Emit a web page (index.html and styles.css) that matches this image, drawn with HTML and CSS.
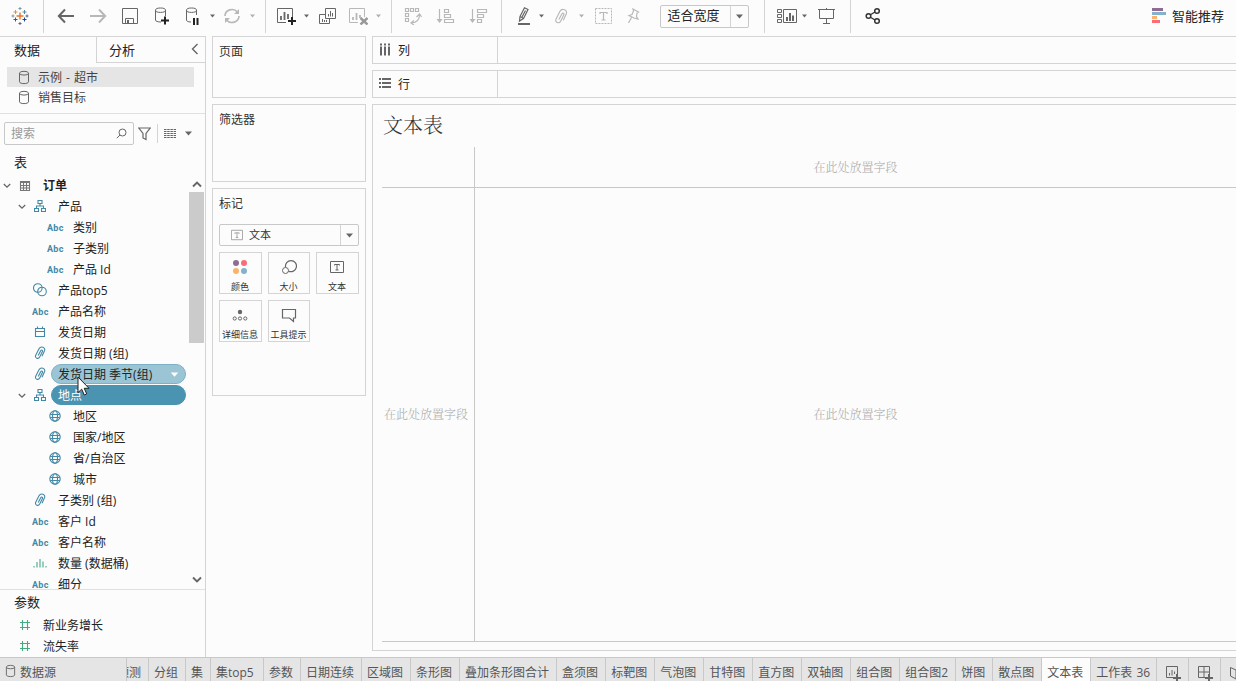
FILE: index.html
```html
<!DOCTYPE html>
<html lang="zh-CN">
<head>
    <meta charset="UTF-8">
    <meta name="viewport" content="width=device-width, initial-scale=1.0">
    <title>文本表</title>
    <link rel="stylesheet" href="styles.css">
</head>
<body>
    <!-- 图标定义 -->
    <svg class="defs">
        <symbol id="i-db" viewBox="0 0 12 15">
            <path d="M1.5 3.2v8.6c0 1 2 1.8 4.5 1.8s4.5-.8 4.5-1.8V3.2"/>
            <ellipse cx="6" cy="3.2" rx="4.5" ry="1.9"/>
        </symbol>
        <symbol id="i-caret" viewBox="0 0 6 4"><path class="fill" d="M0 .3h6L3 3.7z"/></symbol>
        <symbol id="i-chev" viewBox="0 0 8 6"><path d="M.8 1L4 4.200 7.200 1"/></symbol>
        <symbol id="i-hier" viewBox="0 0 12 12">
            <path d="M4 .5h4v3H4zM.5 8.500h4v3h-4zM7.500 8.500h4v3h-4zM6 3.500V6M2.500 8.500V6h7v2.500"/>
        </symbol>
        <symbol id="i-set" viewBox="0 0 14 14">
            <circle cx="4.800" cy="5" r="4.300"/><circle cx="9" cy="8.500" r="4.300"/>
        </symbol>
        <symbol id="i-cal" viewBox="0 0 12 12">
            <path d="M1.500 2.500h9v8h-9zM1.500 5.500h9M3.500.5v2M8.500.5v2"/>
        </symbol>
        <symbol id="i-clip" viewBox="0 0 12 14">
            <path d="M4.200 9.500L6.700 4.800c.8-1.400 2.400-.6 1.700.8L5.700 11c-1.300 2.500-5.200 1.200-4-1.700L5 2.800c1.800-3.400 6.900-1.500 5.500 2L8 10.200"/>
        </symbol>
        <symbol id="i-globe" viewBox="0 0 12 12">
            <circle cx="6" cy="6" r="5.200"/><ellipse cx="6" cy="6" rx="2.500" ry="5.200"/><path d="M1.200 4.500h9.600M1.200 7.500h9.600"/>
        </symbol>
        <symbol id="i-bins" viewBox="0 0 14 12">
            <path d="M1 9v1.500M4 5v5.500M7 2v8.500M10 4.500v6M13 9v1.500"/>
        </symbol>
        <symbol id="i-num" viewBox="0 0 12 12"><path d="M3.500 1v10M8.500 1v10M1 3.500h10M1 8.500h10"/></symbol>
        <symbol id="i-text" viewBox="0 0 14 14">
            <path d="M.5 1.500h13v11H.5zM4.500 5.500v-1h5v1M7 4.500v5.500M5.500 10h3"/>
        </symbol>
    </svg>

    <div class="toolbar">
        <div class="group g-logo">
            <svg width="18" height="18" viewBox="0 0 18 18">
                <path stroke="#e8762d" stroke-width="1.400" d="M9 5.500v7M5.500 9h7"/>
                <path stroke="#c72035" d="M4.500 10.500v4M2.500 12.500h4"/>
                <path stroke="#eb9129" d="M4.500 3v4M2.500 5h4"/>
                <path stroke="#59879b" d="M13.500 3v4M11.500 5h4"/>
                <path stroke="#1f457e" d="M13.500 10.500v4M11.500 12.500h4"/>
                <path stroke="#7199a6" d="M9 0v3M7.500 1.500h3M2 7.500v3M.5 9h3"/>
                <path stroke="#5b6591" d="M9 15v3M7.500 16.500h3M16 7.500v3M14.500 9h3"/>
            </svg>
        </div>
        <div class="group g-file">
            <svg width="18" height="16"><path stroke-width="2" d="M17 8H2M8 1.500L1.800 8 8 14.500"/></svg>
            <svg class="off" width="18" height="16"><path stroke-width="2" d="M1 8h15M10 1.500L16.200 8 10 14.500"/></svg>
            <svg width="16" height="16"><path d="M.5.5h15v15H.5zM3.500 15.500v-5h8v5"/><path class="fill" d="M5 12h2v3H5z"/></svg>
            <svg width="16" height="18"><path d="M7 15C3.500 15 1.500 14.200 1.500 13V3.200M11.500 3.200V9"/><ellipse cx="6.500" cy="3.200" rx="5" ry="2.200"/><path stroke="#222" stroke-width="2" d="M11 9.500v8M7 13.500h8"/></svg>
            <svg width="16" height="18"><path d="M7 15C4 15 2.500 14.200 2.500 13V3.200M12.500 3.200V8"/><ellipse cx="7.500" cy="3.200" rx="5" ry="2.200"/><path stroke="#222" stroke-width="2" d="M10 11v7M13.500 11v7"/></svg>
            <svg class="caret"><use href="#i-caret"/></svg>
            <svg class="off" width="18" height="16"><path stroke-width="1.600" d="M2 8a7 6.500 0 0 1 12.500-4M16 8A7 6.500 0 0 1 3.500 12"/><path class="fill" d="M16 1v5h-5zM2 15v-5h5z"/></svg>
            <svg class="caret off"><use href="#i-caret"/></svg>
        </div>
        <div class="group g-sheet">
            <svg width="20" height="18"><path d="M10 15.500H1.500V1.500h15V11"/><path stroke-width="1.800" d="M5 9v4M8.500 5v8M12 7v5"/><path stroke="#222" stroke-width="2" d="M16 10v8M12 14h8"/></svg>
            <svg class="caret"><use href="#i-caret"/></svg>
            <svg width="19" height="18"><path d="M7.500 1.500h10v10h-10zM7.500 7.500h-6v9h10v-5M4.500 12v3M6.500 13v2M8.500 13v2M10.500 7v2.500M12.500 4v5.500M14.500 6v3.500"/></svg>
            <svg class="off" width="20" height="18"><path d="M10 15.500H1.500V1.500h15V10"/><path stroke-width="1.800" d="M5 10v3M8.500 6v7M12 8v3"/><path stroke="#999" stroke-width="2.400" d="M12.500 11l7 6.500M19.500 11l-7 6.500"/></svg>
            <svg class="caret off"><use href="#i-caret"/></svg>
        </div>
        <div class="group g-sort">
            <svg class="off" width="18" height="18"><path stroke-width="1.200" d="M1.500 1.500h3v3h-3zM6.500 1.500h3v3h-3zM11.500 1.500h3v3h-3zM1.500 6.500h3v3h-3zM1.500 11.500h3v3h-3zM15.500 8c0 5-3 7.500-8 8M12.500 10l3-3 2.200 3M10 13.500l-3 2.500 3 2"/></svg>
            <svg class="off" width="19" height="16"><path stroke-width="1.200" d="M3.500 1v13M8.500 1.500h4v3h-4zM8.500 6.500h6v3h-6zM8.500 11.500h9v3h-9z"/><path class="fill" d="M.5 11h6l-3 4z"/></svg>
            <svg class="off" width="19" height="16"><path stroke-width="1.200" d="M3.500 1v13M8.500 1.500h9v3h-9zM8.500 6.500h6v3h-6zM8.500 11.500h4v3h-4z"/><path class="fill" d="M.5 11h6l-3 4z"/></svg>
        </div>
        <div class="group g-format">
            <svg width="14" height="18"><path stroke-width="1.200" d="M3 9.500L7.500.8l3.500 1.700L6.500 11.500 2.500 14zM3 9.500l3.500 2M8.500 3.500L5 10"/><path stroke-width="2" d="M1 17h12"/></svg>
            <svg class="caret"><use href="#i-caret"/></svg>
            <svg class="off" width="14" height="17"><use href="#i-clip"/></svg>
            <svg class="caret off"><use href="#i-caret"/></svg>
            <svg class="off" width="17" height="16"><path stroke-dasharray="2 1" d="M.5.5h16v15H.5z"/><path stroke-width="1.200" d="M5 6V4.500h7V6M8.500 4.500v7.500M6.500 12h4"/></svg>
            <svg class="off" width="14" height="16"><path stroke-width="1.200" d="M7 1l5.500 3-1.500 1-.5 3.500 1.500 2.500-4-1-5-2.500 3-1L7.500 3zM5.500 9.500L2.500 15"/></svg>
            <div class="select fit"><span>适合宽度</span><i><svg class="caret big"><use href="#i-caret"/></svg></i></div>
        </div>
        <div class="group g-show">
            <svg width="20" height="16"><path d="M.5 1.500h4v3h-4zM.5 6.500h4v3h-4zM.5 11.500h4v3h-4zM6.500 1.500h13v13h-13z"/><path stroke-width="2" d="M10 9v4M13 5v8M16 7.500V13"/></svg>
            <svg class="caret"><use href="#i-caret"/></svg>
            <svg width="17" height="16"><path d="M0 1.500h17M1.500 1.500v9h14v-9M8.500 0v1.500M8.500 10.500v5M5 15.500h7"/></svg>
        </div>
        <div class="group g-share">
            <svg class="dark" width="16" height="18"><path stroke-width="1.300" d="M5 8l5-3M5 10l5 3"/><g stroke-width="1.500"><circle cx="3.500" cy="9" r="2.300"/><circle cx="12" cy="4" r="2.300"/><circle cx="12" cy="14" r="2.300"/></g></svg>
        </div>
        <div class="showme">
            <svg width="14" height="15"><path stroke="#8e6c94" stroke-width="3" d="M0 1.500h11"/><path stroke="#83b3cb" stroke-width="3" d="M0 5.500h14"/><path stroke="#fbb36b" stroke-width="3" d="M0 9.500h5"/><path stroke="#fa6d78" stroke-width="3" d="M0 13.500h8"/></svg>
            <span>智能推荐</span>
        </div>
    </div>

    <div class="main">
        <div class="side">
            <div class="side-tabs">
                <div class="side-tab">数据</div>
                <div class="side-tab other">分析<svg width="8" height="12"><path stroke-width="1.400" d="M6.500 1L1.500 6l5 5"/></svg></div>
            </div>
            <div class="sources">
                <div class="source on"><svg class="db"><use href="#i-db"/></svg><span>示例 - 超市</span></div>
                <div class="source"><svg class="db"><use href="#i-db"/></svg><span>销售目标</span></div>
            </div>
            <div class="search-row">
                <div class="search">搜索<svg width="11" height="11"><circle cx="6.500" cy="4.500" r="3.500"/><path d="M4 7L.8 10.200"/></svg></div>
                <svg width="13" height="14"><path stroke-width="1.200" d="M.8 1h11.400L8 6.500v6l-3-1.500V6.500z"/></svg>
                <div class="view-as">
                    <svg width="12" height="10"><path stroke-dasharray="2.500 .7" d="M0 .5h12M0 2.500h12M0 4.500h12M0 6.500h12M0 8.500h12"/></svg>
                    <svg class="caret big"><use href="#i-caret"/></svg>
                </div>
            </div>
            <div class="heading">表</div>
            <div class="fields">
                <div class="field-list">
                    <div class="field table"><svg class="chev"><use href="#i-chev"/></svg><svg class="icon grey" viewBox="0 0 12 12"><path d="M1.500 1.500h9v9h-9zM1.500 2.500h9M1.500 5.500h9M1.500 8h9M4.500 3v7.500M7.500 3v7.500"/></svg><span>订单</span></div>
                    <div class="field parent"><svg class="chev"><use href="#i-chev"/></svg><svg class="icon"><use href="#i-hier"/></svg><span>产品</span></div>
                    <div class="field child"><b>Abc</b><span>类别</span></div>
                    <div class="field child"><b>Abc</b><span>子类别</span></div>
                    <div class="field child"><b>Abc</b><span>产品 Id</span></div>
                    <div class="field"><svg class="icon wide"><use href="#i-set"/></svg><span>产品top5</span></div>
                    <div class="field"><b>Abc</b><span>产品名称</span></div>
                    <div class="field"><svg class="icon"><use href="#i-cal"/></svg><span>发货日期</span></div>
                    <div class="field"><svg class="icon clip"><use href="#i-clip"/></svg><span>发货日期 (组)</span></div>
                    <div class="field"><svg class="icon clip"><use href="#i-clip"/></svg><span class="pill hover">发货日期 季节(组)<svg class="caret"><use href="#i-caret"/></svg></span>
                        <svg class="cursor" viewBox="0 0 13 20"><path d="M1 1v15.500l3.700-3.300 2.600 5.800 2.400-1.100-2.500-5.600H12z"/></svg>
                    </div>
                    <div class="field parent"><svg class="chev"><use href="#i-chev"/></svg><svg class="icon"><use href="#i-hier"/></svg><span class="pill on">地点</span></div>
                    <div class="field child"><svg class="icon"><use href="#i-globe"/></svg><span>地区</span></div>
                    <div class="field child"><svg class="icon"><use href="#i-globe"/></svg><span>国家/地区</span></div>
                    <div class="field child"><svg class="icon"><use href="#i-globe"/></svg><span>省/自治区</span></div>
                    <div class="field child"><svg class="icon"><use href="#i-globe"/></svg><span>城市</span></div>
                    <div class="field"><svg class="icon clip"><use href="#i-clip"/></svg><span>子类别 (组)</span></div>
                    <div class="field"><b>Abc</b><span>客户 Id</span></div>
                    <div class="field"><b>Abc</b><span>客户名称</span></div>
                    <div class="field"><svg class="icon wide green"><use href="#i-bins"/></svg><span>数量 (数据桶)</span></div>
                    <div class="field"><b>Abc</b><span>细分</span></div>
                </div>
                <div class="scrollbar">
                    <svg class="up"><use href="#i-chev"/></svg>
                    <div class="thumb"></div>
                    <svg><use href="#i-chev"/></svg>
                </div>
            </div>
            <div class="params">
                <div class="heading">参数</div>
                <div class="field param"><svg class="icon green"><use href="#i-num"/></svg><span>新业务增长</span></div>
                <div class="field param"><svg class="icon green"><use href="#i-num"/></svg><span>流失率</span></div>
            </div>
        </div>

        <div class="cards">
            <div class="card pages">页面</div>
            <div class="card filters">筛选器</div>
            <div class="card marks">
                <div>标记</div>
                <div class="select mark-type"><svg width="12" height="12"><use href="#i-text"/></svg><span>文本</span><i><svg class="caret big"><use href="#i-caret"/></svg></i></div>
                <div class="mark-grid">
                    <div class="mark"><svg class="dots" width="16" height="16"><circle cx="4" cy="4" r="3" fill="#8e6c94"/><circle cx="12" cy="4" r="3" fill="#fa6d78"/><circle cx="4" cy="12" r="3" fill="#fbb36b"/><circle cx="12" cy="12" r="3" fill="#83b3cb"/></svg>颜色</div>
                    <div class="mark"><svg width="16" height="16"><path stroke-width="1.200" d="M4.600 8.300a5.500 5.500 0 1 1 3 3.800"/><circle cx="4.500" cy="11.500" r="3"/></svg>大小</div>
                    <div class="mark"><svg width="14" height="16"><use href="#i-text"/></svg>文本</div>
                    <div class="mark"><svg width="16" height="16"><circle class="fill" cx="8" cy="5" r="2.200"/><circle cx="2.700" cy="11.500" r="1.600"/><circle cx="8" cy="11.500" r="1.600"/><circle cx="13.300" cy="11.500" r="1.600"/></svg>详细信息</div>
                    <div class="mark"><svg width="16" height="16"><path stroke-width="1.200" d="M1.500 2.500h13v8.500h-2v3.500L8.500 11h-7z"/></svg>工具提示</div>
                </div>
            </div>
        </div>

        <div class="work">
            <div class="shelf"><div class="shelf-name"><svg width="12" height="13"><path stroke-width="2" d="M2 3.500v9M6 3.500v9M10 3.500v9M2 .5v2M6 .5v2M10 .5v2"/></svg><span>列</span></div></div>
            <div class="shelf"><div class="shelf-name"><svg width="12" height="13"><path stroke-width="2" d="M0 2h2M3 2h9M0 6h2M3 6h9M0 10h2M3 10h9"/></svg><span>行</span></div></div>
            <div class="view">
                <div class="view-title">文本表</div>
                <div class="pane">
                    <div class="cell corner"></div>
                    <div class="cell top">在此处放置字段</div>
                    <div class="cell left">在此处放置字段</div>
                    <div class="cell body">在此处放置字段</div>
                </div>
            </div>
        </div>
    </div>

    <div class="sheets">
        <div class="datasource"><svg width="11" height="14"><use href="#i-db"/></svg>数据源</div>
        <div class="sheet cut"><span>预测</span></div>
        <div class="sheet">分组</div>
        <div class="sheet">集</div>
        <div class="sheet w-top5">集top5</div>
        <div class="sheet">参数</div>
        <div class="sheet">日期连续</div>
        <div class="sheet">区域图</div>
        <div class="sheet">条形图</div>
        <div class="sheet">叠加条形图合计</div>
        <div class="sheet">盒须图</div>
        <div class="sheet">标靶图</div>
        <div class="sheet">气泡图</div>
        <div class="sheet">甘特图</div>
        <div class="sheet">直方图</div>
        <div class="sheet">双轴图</div>
        <div class="sheet">组合图</div>
        <div class="sheet w-combo2">组合图2</div>
        <div class="sheet">饼图</div>
        <div class="sheet">散点图</div>
        <div class="sheet on">文本表</div>
        <div class="sheet w-last">工作表 36</div>
        <div class="sheet new"><svg width="16" height="16"><path d="M9 11.500H1.500v-11h11V8M4.500 7v2.500M7 4v5.500M9.500 5.500V8"/><path stroke-width="2" d="M12 8v8M8 12h8"/></svg></div>
        <div class="sheet new"><svg width="16" height="16"><path d="M9 11.500H1.500v-11h11V8M7 .5v11M1.500 6h11"/><path stroke-width="2" d="M12 8v8M8 12h8"/></svg></div>
        <div class="sheet new"><svg width="16" height="16"><path d="M1.500 1.500L7 4v9l-5.500-3zM7 4l5.500-2.500V8"/></svg></div>
    </div>
</body>
</html>
```
FILE: styles.css
```css
* {
    box-sizing: border-box;
}
body {
    margin: 0;
    width: 1236px;
    height: 681px;
    overflow: hidden;
    display: flex;
    flex-direction: column;
    background: #fcfcfc;
    color: #222;
    font: 12px/20px "Open Sans", "Noto Sans CJK SC", sans-serif;
    white-space: nowrap;
}
svg {
    display: block;
    flex: none;
    fill: none;
    stroke: #666;
    stroke-width: 1;
}
.defs {
    position: absolute;
    width: 0;
    height: 0;
}
.fill {
    fill: #666;
    stroke: none;
}
.dots {
    stroke: none;
}
.off {
    stroke: #b8b8b8;
}
.off .fill {
    fill: #b8b8b8;
}
.dark {
    stroke: #333;
}
.caret {
    width: 5px;
    height: 4px;
}
.caret.big {
    width: 7px;
    height: 5px;
}
.caret.off {
    opacity: 0.5;
}
.db {
    width: 12px;
    height: 15px;
}

/* 工具栏 */
.toolbar {
    display: flex;
    height: 36px;
    flex: none;
}
.group {
    display: grid;
    align-items: center;
    justify-items: center;
    align-content: start;
    grid-template-rows: 32px;
    height: 33px;
    border-right: 1px solid #d4d4d4;
}
.g-logo {
    width: 44px;
    padding-right: 3px;
}
.g-file {
    width: 222px;
    padding-left: 6px;
    grid-template-columns: 32px 32px 32px 32px 28px 13px 26px 14px;
}
.g-sheet {
    width: 126px;
    padding-left: 6px;
    grid-template-columns: 28px 12px 31px 30px 11px;
}
.g-sort {
    width: 110px;
    padding-left: 5px;
    grid-template-columns: 32px 33px 32px;
}
.g-format {
    width: 263px;
    padding-left: 9px;
    grid-template-columns: 25px 11px 28px 13px 31px 28px 114px;
}
.g-show {
    width: 86px;
    padding-left: 9px;
    grid-template-columns: 25px 11px 33px;
}
.g-share {
    width: 44px;
    border: 0;
}
.select {
    display: flex;
    align-items: center;
    height: 22px;
    border: 1px solid #c8c8c8;
    border-radius: 2px;
}
.select i {
    display: flex;
    align-items: center;
    justify-content: center;
    width: 18px;
    height: 100%;
    margin-left: auto;
    border-left: 1px solid #d4d4d4;
}
.fit {
    width: 89px;
    height: 23px;
    padding-left: 7px;
    font-size: 13px;
}
.fit span {
    margin-top: -2px;
}
.showme {
    display: flex;
    align-items: center;
    gap: 6px;
    height: 31px;
    margin-left: auto;
    padding-right: 12px;
    font-size: 13px;
}

.main {
    display: flex;
    flex: 1;
    min-height: 0;
}

/* 数据窗格 */
.side {
    display: flex;
    flex-direction: column;
    width: 206px;
    flex: none;
    border-top: 1px solid #d4d4d4;
    border-right: 1px solid #d4d4d4;
}
.side-tabs {
    display: flex;
    height: 26px;
    font-size: 13px;
    line-height: 26px;
}
.side-tab {
    width: 96px;
    padding-left: 14px;
}
.side-tab.other {
    display: flex;
    flex: 1;
    justify-content: space-between;
    padding: 0 6px 0 12px;
    border-left: 1px solid #d4d4d4;
    border-bottom: 1px solid #d4d4d4;
}
.side-tab svg {
    margin-top: 6px;
}
.sources {
    height: 51px;
    flex: none;
    padding: 4px 11px 0 7px;
    border-bottom: 1px solid #e0e0e0;
}
.source {
    display: flex;
    align-items: center;
    gap: 8px;
    height: 20px;
    padding-left: 11px;
    color: #444;
    word-spacing: 1px;
}
.source span {
    padding-top: 2px;
}
.source.on {
    background: #e5e5e5;
}
.search-row {
    display: flex;
    align-items: center;
    height: 39px;
    flex: none;
    padding-left: 4px;
}
.search {
    display: flex;
    align-items: center;
    justify-content: space-between;
    width: 130px;
    height: 23px;
    margin-right: 4px;
    padding: 0 6px;
    border: 1px solid #c8c8c8;
    border-radius: 2px;
    color: #999;
}
.view-as {
    display: flex;
    align-items: center;
    gap: 9px;
    height: 19px;
    margin-left: 6px;
    padding-left: 6px;
    border-left: 1px solid #d4d4d4;
}
.heading {
    height: 22px;
    padding-left: 14px;
    line-height: 19px;
    flex: none;
    font-size: 13px;
}
.fields {
    display: flex;
    flex: 1;
    min-height: 0;
}
.field-list {
    flex: 1;
    overflow: hidden;
}
.field {
    position: relative;
    display: flex;
    align-items: center;
    height: 21px;
    padding-left: 32px;
}
.field .icon {
    width: 12px;
    height: 12px;
    margin: 0 12px 1px 2px;
    stroke: #4389a5;
    stroke-width: 1.1;
}
.field .icon.wide {
    width: 14px;
    height: 14px;
    margin: 0 11px 1px 1px;
}
.field .icon.clip {
    height: 14px;
}
.field .icon.grey {
    stroke: #777;
}
.field .icon.green {
    stroke: #45a982;
}
.field b {
    width: 26px;
    color: #4389a5;
    font: bold 9px/20px Roboto, sans-serif;
    letter-spacing: 0.3px;
}
.chev {
    width: 8px;
    height: 6px;
    stroke-width: 1.3;
}
.field.table {
    padding-left: 3px;
    font-weight: bold;
}
.field.table .icon {
    margin: 0 12px 0 8px;
}
.field.parent {
    padding-left: 18px;
}
.field.parent .icon {
    margin-left: 8px;
}
.field.child {
    padding-left: 47px;
}
.field.param {
    padding-left: 17px;
}
.field.param .icon {
    margin-right: 12px;
}
.field .pill {
    display: flex;
    align-items: center;
    justify-content: space-between;
    width: 135px;
    height: 20px;
    margin: 0 0 1px -7px;
    padding: 1px 6px 0;
    border: 1px solid #7db1c8;
    border-radius: 10px;
    background: #9bc5d5;
}
.field .pill.on {
    border-color: #4a94b2;
    background: #4a94b2;
    color: #fff;
}
.pill .caret {
    width: 9px;
    height: 5px;
    filter: brightness(0) invert(1);
}
.cursor {
    position: absolute;
    left: 77px;
    top: 12px;
    z-index: 2;
    width: 13px;
    height: 20px;
    fill: #fff;
    stroke: #222;
}
.scrollbar {
    display: flex;
    flex-direction: column;
    align-items: center;
    width: 16px;
    padding: 5px 1px 5px 0;
}
.scrollbar svg {
    width: 10px;
    height: 8px;
    stroke-width: 1.5;
}
.scrollbar .up {
    transform: scaleY(-1);
}
.thumb {
    width: 15px;
    height: 151px;
    margin: 4px 0 auto;
    background: #cbcbcb;
}
.params {
    height: 68px;
    flex: none;
    border-top: 1px solid #e0e0e0;
}
.params .heading {
    height: 25px;
    line-height: 24px;
}

/* 卡片 */
.cards {
    display: flex;
    flex-direction: column;
    gap: 6px;
    width: 154px;
    margin: 0 6px;
    flex: none;
}
.card {
    padding: 5px 6px;
    border: 1px solid #d4d4d4;
    color: #333;
}
.pages {
    height: 62px;
}
.filters {
    height: 78px;
}
.marks {
    height: 208px;
}
.mark-type {
    width: 140px;
    margin-top: 10px;
    padding-left: 11px;
    font-size: 11px;
}
.mark-type svg {
    stroke: #999;
}
.mark-type span {
    margin-left: 6px;
}
.mark-grid {
    display: grid;
    grid-template-columns: 43px 42px 43px;
    grid-auto-rows: 42px;
    gap: 6px;
    margin-top: 6px;
}
.mark {
    display: flex;
    flex-direction: column;
    align-items: center;
    padding: 6px 1px 0 0;
    border: 1px solid #d4d4d4;
    font-size: 9px;
    line-height: 12px;
}
.mark svg {
    margin-bottom: 6px;
}

/* 工作区 */
.work {
    display: flex;
    flex-direction: column;
    gap: 6px;
    flex: 1;
    padding-bottom: 6px;
}
.shelf {
    height: 28px;
    flex: none;
    border: 1px solid #d4d4d4;
    border-right: 0;
}
.shelf-name {
    display: flex;
    align-items: center;
    gap: 7px;
    width: 125px;
    height: 100%;
    padding-left: 6px;
    border-right: 1px solid #d4d4d4;
}
.shelf-name svg {
    margin-bottom: 1px;
}
.shelf-name span {
    padding-top: 2px;
}
.view {
    display: flex;
    flex-direction: column;
    flex: 1;
    padding: 5px 0 8px 9px;
    border: 1px solid #d4d4d4;
    border-right: 0;
}
.view-title {
    height: 37px;
    padding-left: 1px;
    color: #333;
    font: 300 20px/30px "Noto Serif CJK SC", "Noto Sans CJK SC", serif;
}
.pane {
    display: grid;
    grid-template-columns: 93px 1fr;
    grid-template-rows: 41px 1fr;
    flex: 1;
    border-bottom: 1px solid #c8c8c8;
}
.cell {
    display: flex;
    align-items: center;
    justify-content: center;
    color: #aaa;
    font-family: "Noto Serif CJK SC", "Noto Sans CJK SC", serif;
    font-weight: 300;
}
.corner,
.left {
    border-right: 1px solid #c8c8c8;
}
.corner,
.top {
    border-bottom: 1px solid #c8c8c8;
}
.left,
.body {
    padding-bottom: 2px;
}
.left {
    padding-right: 4px;
}

/* 工作表标签 */
.sheets {
    display: flex;
    height: 24px;
    flex: none;
    overflow: hidden;
    border-top: 1px solid #c8c8c8;
    background: #e5e5e5;
    color: #555;
    line-height: 29px;
}
.datasource {
    display: flex;
    gap: 4px;
    width: 127px;
    flex: none;
    padding-left: 5px;
    border-right: 1px solid #c8c8c8;
}
.datasource svg {
    margin-top: 6px;
}
.sheet {
    flex: none;
    padding: 0 7px 0 5px;
    border-right: 1px solid #c8c8c8;
}
.sheet.on {
    background: #fcfcfc;
}
.cut {
    display: flex;
    justify-content: flex-end;
    width: 22px;
    overflow: hidden;
    padding-left: 0;
}
.w-top5 {
    width: 53px;
}
.w-combo2 {
    width: 56px;
}
.w-last {
    width: 66px;
    word-spacing: 1px;
}
.new {
    width: 32px;
    padding: 8px 0 0 8px;
}
```
